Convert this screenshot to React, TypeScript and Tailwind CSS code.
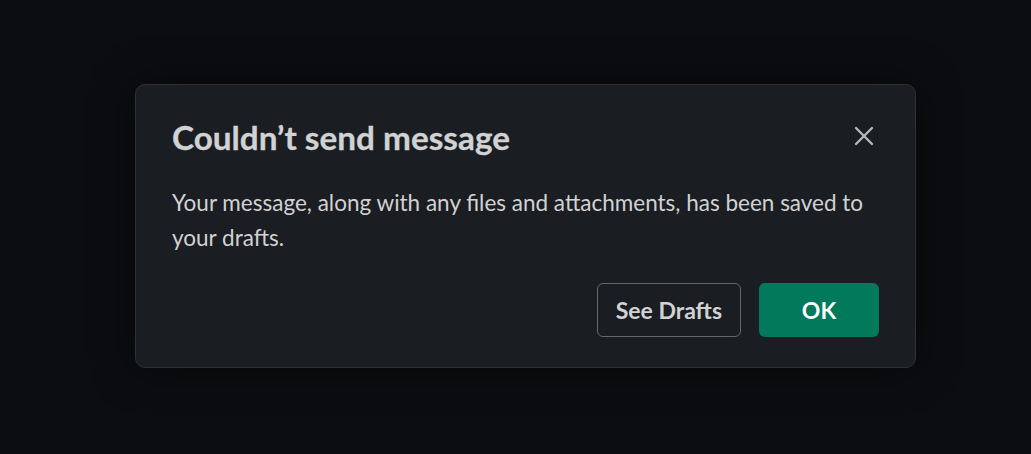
import React from "react";

export default function App() {
  return (
    <div
      className="w-[1031px] h-[454px] bg-[#0c0d10] pt-[84px] pl-[135px]"
      style={{ fontFamily: "Lato, 'Noto Sans', sans-serif" }}
    >
      <div className="w-[781px] h-[284px] rounded-[10px] border border-[#2e3035] bg-[#1a1d21] shadow-[0_0_40px_rgba(0,0,0,0.5)] pl-[36px] pr-[36px] pt-[32px] flex flex-col">
        <div className="flex items-start justify-between">
          <h1 className="text-[33.3px] font-bold leading-[40px] text-[#d1d2d3] [-webkit-text-stroke:0.3px_#d1d2d3]">
            Couldn’t send message
          </h1>
          <button className="mt-[3px] mr-[-1px] w-[32px] h-[32px] flex items-center justify-center text-[#b9babd]">
            <svg width="20" height="20" viewBox="0 0 20 20" fill="none">
              <path d="M2 2L18 18M18 2L2 18" stroke="currentColor" strokeWidth="2.3" strokeLinecap="round" />
            </svg>
          </button>
        </div>
        <p className="mt-[28px] text-[22.5px] leading-[35px] text-[#d1d2d3]">
          Your message, along with any files and attachments, has been saved to your drafts.
        </p>
        <div className="mt-auto mb-[30px] flex justify-end gap-[18px]">
          <button className="h-[54px] px-[18px] rounded-[6px] border border-[#65676b] text-[23px] font-bold text-[#d1d2d3]">
            See Drafts
          </button>
          <button className="h-[54px] w-[120px] rounded-[6px] bg-[#007a5a] text-[23px] font-bold text-white">
            OK
          </button>
        </div>
      </div>
    </div>
  );
}
